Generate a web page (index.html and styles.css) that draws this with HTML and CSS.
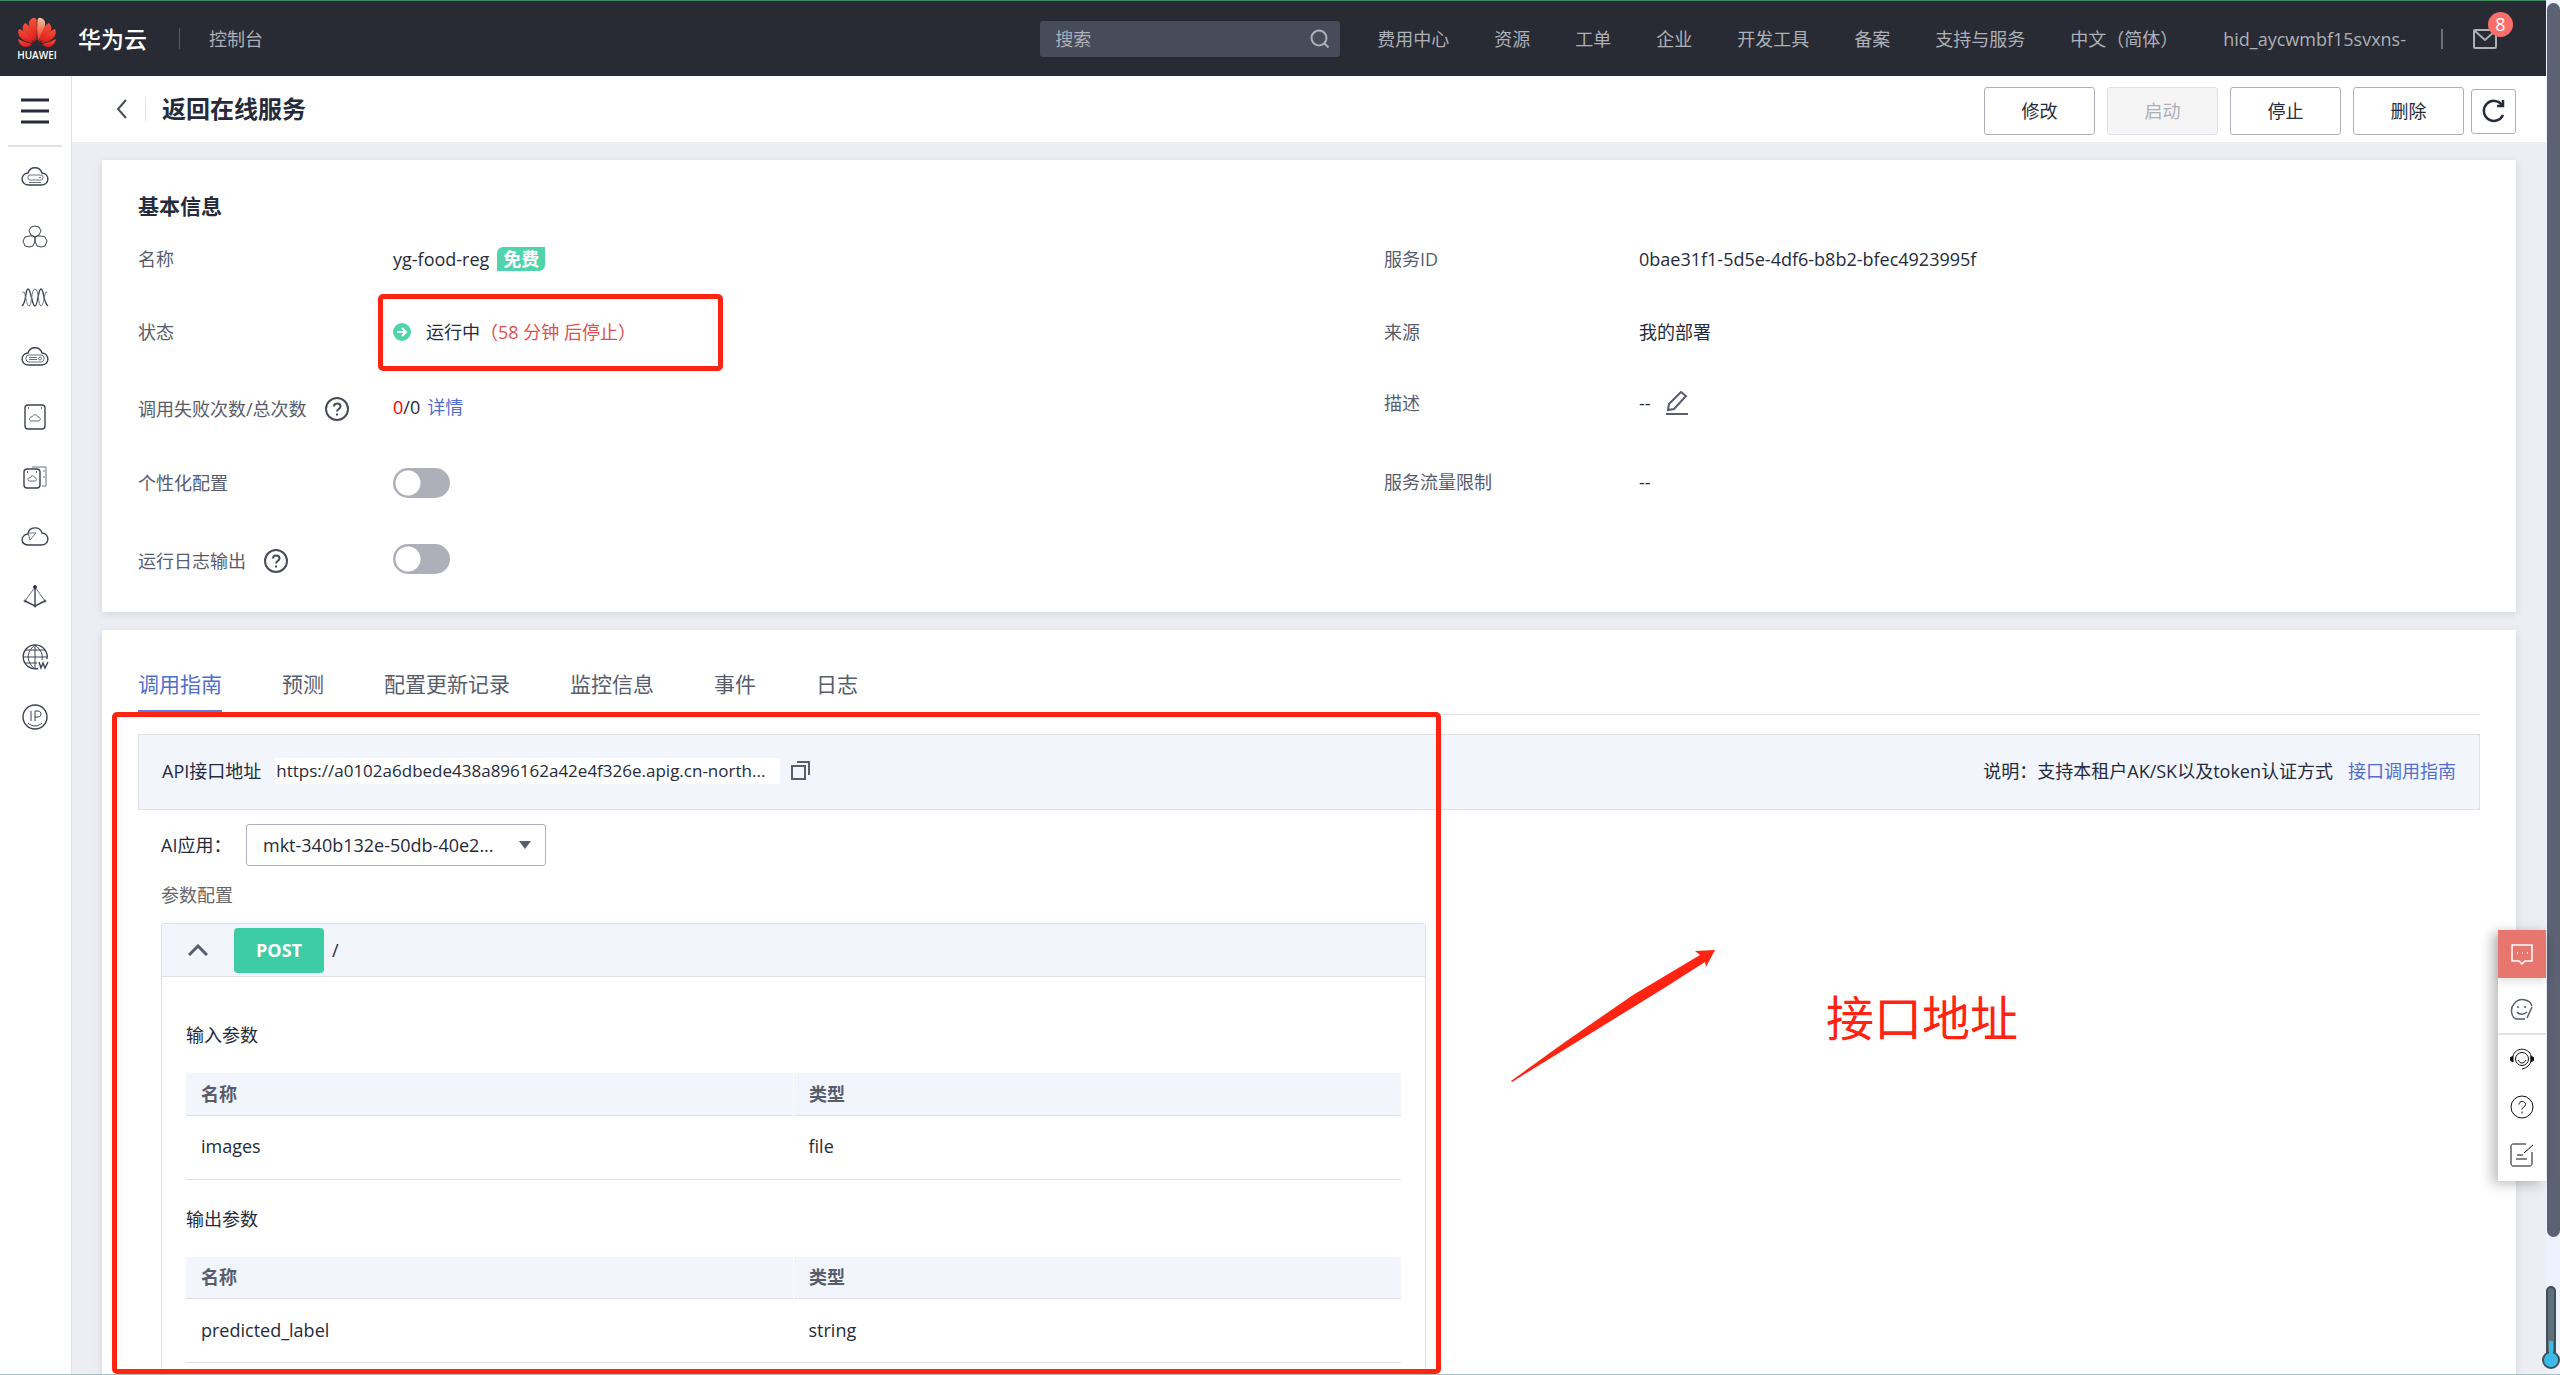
FILE: index.html
```html
<!DOCTYPE html>
<html lang="zh-CN">
<head>
<meta charset="utf-8">
<title>返回在线服务</title>
<link rel="stylesheet" href="styles.css">
</head>
<body>
<div class="app">
  <div class="main-area">
    <header class="topbar">
      <svg class="logo" width="40" height="44" viewBox="0 0 40 44" aria-label="HUAWEI">
        <defs>
          <linearGradient id="petal" x1="0" y1="0" x2="0" y2="1"><stop offset="0" stop-color="#f2553d"/><stop offset="1" stop-color="#e01818"/></linearGradient>
          <linearGradient id="petal-light" x1="0" y1="0" x2="0" y2="1"><stop offset="0" stop-color="#fbc39c"/><stop offset="1" stop-color="#e8301f"/></linearGradient>
        </defs>
        <g fill="url(#petal)">
          <path d="M19 24C13 15 10 6 13 3c3-3 6-3 6.500 0 .5 7 .5 14-.5 21z"/>
          <path fill="url(#petal-light)" d="M21 24c6-9 9-18 6-21-3-3-6-3-6.500 0-.5 7-.5 14 .5 21z"/>
          <path d="M18 25C8 20 2 12 8 6c5 2 9 12 10 19z"/>
          <path d="M22 25c10-5 16-13 10-19-5 2-9 12-10 19z"/>
          <path d="M16 26C5 25-1 18 2 12c6 2 11 8 14 14z"/>
          <path d="M24 26c11-1 17-8 14-14-6 2-11 8-14 14z"/>
          <path d="M15 27C10 32 3 31 1 22c4 2 9 4 14 5z"/>
          <path d="M25 27c5 5 12 4 14-5-4 2-9 4-14 5z"/>
        </g>
        <text x="20" y="42" text-anchor="middle" class="logo-text">HUAWEI</text>
      </svg>
      <span class="brand">华为云</span>
      <a class="console" href="#">控制台</a>
      <label class="search">
        <input type="text" placeholder="搜索" aria-label="搜索">
        <svg width="20" height="20" viewBox="0 0 20 20" fill="none" stroke="#adb0b8" stroke-width="2"><circle cx="9" cy="9" r="7.500"/><path d="M14 14l4.500 4.500"/></svg>
      </label>
      <nav class="topnav">
        <a href="#">费用中心</a><a href="#">资源</a><a href="#">工单</a><a href="#">企业</a><a href="#">开发工具</a><a href="#">备案</a><a href="#">支持与服务</a><a href="#">中文（简体）</a><a href="#">hid_aycwmbf15svxns-</a>
      </nav>
      <button class="mail" aria-label="消息">
        <svg width="24" height="20" viewBox="0 0 24 20" fill="none" stroke="#adb0b8" stroke-width="2"><rect x="1" y="1" width="22" height="18" rx="1"/><path d="M2 2l10 9 10-9"/></svg>
        <span class="badge">8</span>
      </button>
    </header>
    <div class="body">
      <aside class="sidebar">
        <button class="burger" aria-label="菜单"><svg width="28" height="26" viewBox="0 0 28 26" stroke="#252b3a" stroke-width="3"><path d="M0 2h28M0 13h28M0 24h28"/></svg></button>
        <a href="#" aria-label="云服务器"><svg viewBox="0 0 28 28"><path class="bold" d="M7 10C9 3 19 3 21 10c8 1 8 12-1 12H8C-1 22-1 11 7 10z"/><g class="thin"><rect x="7" y="12" width="15" height="5" rx="2"/><path d="M8 19.500h12M18 14.500h2"/></g></svg></a>
        <a href="#" aria-label="集群"><svg viewBox="0 0 28 28"><path d="M14 3l4 1 2 4-2 4-4 2-4-2-2-4 2-4zM8 13l-4 1-2 4 2 5 4 1 4-1 2-5v-4l-2-1zM20 13l4 1 2 4-2 5-4 1-4-1-2-5v-4l2-1z"/></svg></a>
        <a href="#" aria-label="弹性伸缩"><svg viewBox="0 0 28 28"><path class="bold" d="M1 23C6 19 4 6 7 6s4 17 7 17S17 6 20 6s2 13 7 17"/><path class="thin" d="M2 10c2-6 3 13 6 13s2-17 6-17 3 17 6 17 4-19 6-13"/></svg></a>
        <a href="#" aria-label="专属云"><svg viewBox="0 0 28 28"><path class="bold" d="M7 10C9 3 19 3 21 10c8 1 8 12-1 12H8C-1 22-1 11 7 10z"/><g class="thin"><rect x="5" y="12" width="18" height="7" rx="3"/><path d="M8 14.500h8M8 16.500h8"/><circle cx="19" cy="15.500" r="1.500"/></g></svg></a>
        <a href="#" aria-label="磁盘"><svg viewBox="0 0 28 28"><rect class="bold" x="4" y="2" width="20" height="24" rx="3"/><path class="thin" d="M10 18c-3-1-1-5 1-4 1-3 5-3 6 0 3 0 3 4 0 4z"/><path class="bold" d="M7 5h1M20 5h1"/></svg></a>
        <a href="#" aria-label="磁盘备份"><svg viewBox="0 0 28 28"><rect class="bold" x="3" y="6" width="16" height="19" rx="3"/><path class="thin" d="M11 4h14v19h-4M8 18c-2-1-1-4 1-3 1-3 4-3 5 0 2 0 2 3 0 3zM22 8h2M22 14h2"/><path class="bold" d="M6 9h1M15 9h1"/></svg></a>
        <a href="#" aria-label="云迁移"><svg viewBox="0 0 28 28"><path class="bold" d="M7 11C8 3 19 3 21 10c8 1 8 12-1 12H8C-1 22-1 12 7 11z"/><path class="thin" d="M8 10h7l-6 7-2-8"/></svg></a>
        <a href="#" aria-label="网络"><svg viewBox="0 0 28 28"><path class="thin" d="M14 4L4 18M14 4l10 14"/><path class="bold" d="M4 18l10 5 10-5M14 4v19"/><circle cx="14" cy="4" r="1.500" fill="#252b3a"/><circle cx="4" cy="18" r="1"/><circle cx="24" cy="18" r="1"/><circle cx="14" cy="23" r="1"/></svg></a>
        <a href="#" aria-label="域名"><svg viewBox="0 0 28 28"><path class="bold" d="M17 25.500A12 12 0 1 1 26 16M18 19l2 6 2-5 2 5 3-6"/><path d="M14 2c-9 7-9 17 0 24M14 2c7 5 8 11 7 15M14 2v24M2 14h24M4 7h20M4 20h12"/></svg></a>
        <a href="#" aria-label="弹性公网IP"><svg viewBox="0 0 28 28"><circle class="bold" cx="14" cy="14" r="12"/><path d="M10 8v10M14 18V8h3c4 0 4 6 0 6h-3M7 20c4 4 10 4 14 0"/></svg></a>
      </aside>
      <main class="content">
        <div class="titlebar">
          <button class="back" aria-label="返回"><svg width="12" height="20" viewBox="0 0 12 20" fill="none" stroke="#464c59" stroke-width="2"><path d="M10 1L2 10l8 9"/></svg></button>
          <h1>返回在线服务</h1>
          <div class="actions">
            <button class="btn">修改</button>
            <button class="btn" disabled>启动</button>
            <button class="btn">停止</button>
            <button class="btn">删除</button>
            <button class="btn refresh" aria-label="刷新"><svg width="24" height="24" viewBox="0 0 24 24" fill="none" stroke="#252b3a" stroke-width="2.500"><path d="M21 16A10 10 0 1 1 20 6"/><path d="M15 7h6V1"/></svg></button>
          </div>
        </div>
        <section class="card info">
          <h2>基本信息</h2>
          <div class="info-cols">
            <dl class="info-left">
              <dt>名称</dt><dd>yg-food-reg<span class="tag">免费</span></dd>
              <dt>状态</dt>
              <dd class="status"><svg width="18" height="18" viewBox="0 0 18 18"><circle cx="9" cy="9" r="9" fill="#50d4ab"/><path d="M4 9h9M9 5l4 4-4 4" fill="none" stroke="#fff" stroke-width="2"/></svg><span>运行中<span class="warn">（58 分钟 后停止）</span></span><span class="mark mark-status"></span></dd>
              <dt class="with-help">调用失败次数/总次数<svg class="help" viewBox="0 0 24 24"><circle cx="12" cy="12" r="11"/><path d="M9 9.500c0-4 6.500-4 6.500 0 0 2.500-3.500 2.500-3.500 5M12 16.500v2"/></svg></dt>
              <dd><span class="fail">0</span>/0<a class="detail" href="#">详情</a></dd>
              <dt><label for="custom">个性化配置</label></dt><dd><input class="switch" type="checkbox" id="custom"></dd>
              <dt class="with-help"><label for="runlog">运行日志输出</label><svg class="help" viewBox="0 0 24 24"><circle cx="12" cy="12" r="11"/><path d="M9 9.500c0-4 6.500-4 6.500 0 0 2.500-3.500 2.500-3.500 5M12 16.500v2"/></svg></dt><dd><input class="switch" type="checkbox" id="runlog"></dd>
            </dl>
            <dl class="info-right">
              <dt>服务ID</dt><dd>0bae31f1-5d5e-4df6-b8b2-bfec4923995f</dd>
              <dt>来源</dt><dd>我的部署</dd>
              <dt>描述</dt><dd>--<button class="edit" aria-label="编辑"><svg width="22" height="24" viewBox="0 0 22 24" fill="none" stroke="#575d6c" stroke-width="2"><path d="M3 13L15 1l5 4L8 18l-6 1zM0 23h22"/></svg></button></dd>
              <dt>服务流量限制</dt><dd>--</dd>
            </dl>
          </div>
        </section>
        <section class="card guide">
          <nav class="tabs">
            <a class="active" href="#">调用指南</a><a href="#">预测</a><a href="#">配置更新记录</a><a href="#">监控信息</a><a href="#">事件</a><a href="#">日志</a>
          </nav>
          <div class="api">
            <span>API接口地址</span>
            <span class="url">https://a0102a6dbede438a896162a42e4f326e.apig.cn-north...</span>
            <button class="copy" aria-label="复制"><svg width="20" height="20" viewBox="0 0 20 20" fill="none" stroke="#575d6c" stroke-width="2"><path d="M1 5h13v13H1zM6 1h12v13"/></svg></button>
            <span class="note">说明：支持本租户AK/SK以及token认证方式</span>
            <a href="#">接口调用指南</a>
          </div>
          <div class="guide-body">
            <div class="app-row">
              <label for="app">AI应用：</label>
              <span class="select-wrap"><select id="app"><option>mkt-340b132e-50db-40e2...</option></select></span>
            </div>
            <h3>参数配置</h3>
            <div class="panel">
              <div class="panel-head">
                <button class="fold" aria-label="收起"><svg width="20" height="12" viewBox="0 0 20 12" fill="none" stroke="#575d6c" stroke-width="3"><path d="M1 11l9-9 9 9"/></svg></button>
                <span class="method">POST</span><span>/</span>
              </div>
              <div class="panel-body">
                <h4>输入参数</h4>
                <table><thead><tr><th>名称</th><th>类型</th></tr></thead><tbody><tr><td>images</td><td>file</td></tr></tbody></table>
                <h4>输出参数</h4>
                <table><thead><tr><th>名称</th><th>类型</th></tr></thead><tbody><tr><td>predicted_label</td><td>string</td></tr></tbody></table>
              </div>
            </div>
          </div>
          <span class="mark mark-guide"></span>
          <svg class="arrow" width="208" height="134" viewBox="0 0 208 134"><path fill="#ff2312" d="M0 132L54 93 122 46 189 6l-5-4 20-1-9 17-1-5-44 28-60 37-89 55z"/></svg>
          <span class="callout">接口地址</span>
        </section>
      </main>
    </div>
  </div>
  <div class="scroll"><div class="thumb"></div></div>
  <svg class="gauge" width="18" height="84" viewBox="0 0 18 84"><rect x="5" y="1" width="8" height="72" rx="4" fill="#5f6f7b" stroke="#405059" stroke-width="2"/><circle cx="9" cy="74" r="8" fill="#3cbbe9" stroke="#405059" stroke-width="2"/><path d="M9 55v18" stroke="#3cbbe9" stroke-width="4"/></svg>
  <div class="floatbar">
    <button class="chat" aria-label="反馈"><svg width="24" height="24" viewBox="0 0 24 24"><path d="M2 3h20v16h-7l-3 3-3-3H2zM7 11h1M12 11h1M17 11h1"/></svg></button>
    <div class="tools">
      <button aria-label="评价"><svg class="grey" width="24" height="24" viewBox="0 0 24 24"><path d="M15 22H6c-5-2-6-11-2-15 5-7 16-5 18 2M22 10l-5 11M7 10h2M14 10h2M7 15c2 3 7 3 10 0"/></svg></button>
      <button aria-label="客服"><svg width="24" height="24" viewBox="0 0 24 24"><circle cx="12" cy="12" r="6.500"/><path d="M3 9c2-9 16-9 18 0v5c-1 4-4 7-9 8M8 13c2 4 6 4 8 0"/><path fill="#111" d="M3 9v6L0 13v-2zM21 9v6l3-2v-2z"/></svg></button>
      <button aria-label="帮助"><svg width="24" height="24" viewBox="0 0 24 24"><circle cx="12" cy="12" r="11"/><path d="M9 9.500c0-4 6.500-4 6.500 0 0 2.500-3.500 2.500-3.500 5M12 16.500v2"/></svg></button>
      <button aria-label="建议"><svg width="24" height="24" viewBox="0 0 24 24"><path d="M16 1H3C2 1 1 2 1 3v18c0 1 1 2 2 2h17c1 0 2-1 2-2V9M23 2l-9 8M7 12h6M6 16h11"/></svg></button>
    </div>
  </div>
</div>
</body>
</html>
```
FILE: styles.css
```css
* { box-sizing: border-box; }
body, h1, h2, h3, h4, dl, dd { margin: 0; }
body {
  font-family: "Open Sans", "Noto Sans CJK SC", sans-serif;
  font-size: 18px;
  line-height: 26px;
  color: #252b3a;
  background: #edeef4;
}
a { color: #526ecc; text-decoration: none; }
button, input, select { font: inherit; color: inherit; }
button { background: none; border: 0; padding: 0; cursor: pointer; }
svg { display: block; flex: none; }

.app {
  position: relative;
  display: flex;
  height: 100vh;
  overflow: hidden;
  border-bottom: 1px solid #a3bfc1;
}
.main-area { flex: 1; min-width: 0; display: flex; flex-direction: column; }

/* top bar */
.topbar {
  flex: none;
  display: flex;
  align-items: center;
  height: 76px;
  padding: 0 49px 0 17px;
  background: #282b33;
  border-top: 1px solid #428a5b;
  white-space: nowrap;
}
.logo-text { font: 600 10px "Open Sans", sans-serif; fill: #fff; }
.brand { margin-left: 21px; font-size: 23px; font-weight: 500; color: #fff; }
.console {
  margin-left: 32px;
  padding-left: 30px;
  color: #adb0b8;
  background: linear-gradient(#575d6c, #575d6c) left center / 1px 21px no-repeat;
}
.search {
  display: flex;
  align-items: center;
  width: 300px;
  height: 36px;
  margin-left: auto;
  padding: 0 10px 0 15px;
  background: #464c59;
  border-radius: 3px;
}
.search input { flex: 1; min-width: 0; padding: 0; background: none; border: 0; outline: 0; color: #adb0b8; }
.search input::placeholder { color: #adb0b8; opacity: 1; }
.topnav { display: flex; gap: 45px; margin-left: 37px; }
.topnav a { color: #adb0b8; }
.mail {
  position: relative;
  margin-left: 35px;
  padding-left: 32px;
  background: linear-gradient(#6c7078, #6c7078) left center / 2px 21px no-repeat;
}
.badge {
  position: absolute;
  left: 47px;
  top: -17px;
  width: 25px;
  height: 25px;
  border-radius: 50%;
  background: #fa6e6a;
  color: #fff;
  line-height: 25px;
}

/* side bar */
.body { flex: 1; min-height: 0; display: flex; }
.sidebar {
  flex: none;
  display: flex;
  flex-direction: column;
  align-items: center;
  width: 72px;
  padding: 0 2px 0 0;
  background: #fff;
  border-right: 1px solid #dfe1e6;
}
.sidebar a { display: flex; align-items: center; height: 60px; }
.sidebar a svg { width: 28px; height: 28px; fill: none; stroke: #3d4351; stroke-width: 1; }
.sidebar .bold { stroke-width: 1.4; }
.sidebar .thin { stroke: #6c7280; }
.burger { padding: 22px 13px 21px; border-bottom: 2px solid #dfe1e6; }

/* page title */
.content { flex: 1; min-width: 0; }
.titlebar {
  display: flex;
  align-items: center;
  height: 66px;
  padding: 0 30px 0 44px;
  background: #fff;
}
.titlebar h1 {
  flex: 1;
  margin-left: 17px;
  padding-left: 16px;
  border-left: 1px solid #dfe1e6;
  font-size: 24px;
  line-height: 24px;
}
.actions { display: flex; align-items: center; gap: 12px; padding-top: 4px; }
.btn {
  display: flex;
  align-items: center;
  justify-content: center;
  width: 111px;
  height: 48px;
  background: #fff;
  border: 1px solid #adb0b8;
  border-radius: 3px;
}
.btn:disabled { background: #f5f5f6; border-color: #dfe1e6; color: #adb0b8; }
.refresh { width: 45px; height: 45px; margin-left: -5px; }

/* cards */
.card {
  position: relative;
  margin: 18px 30px 0;
  padding: 0 36px;
  background: #fff;
  box-shadow: 0 2px 8px rgba(40, 43, 51, .12);
}
.info { padding-top: 31px; padding-bottom: 14px; }
.info h2 { margin-bottom: 1px; font-size: 21px; line-height: 30px; }
.info-cols { display: grid; grid-template-columns: 1246px 1fr; }
dl { display: grid; grid-template-columns: 255px 1fr; align-items: center; align-content: start; }
.info-left { grid-template-rows: 74px 72px 78px 74px 78px; }
.info-right { grid-template-rows: 74px 72px 70px 88px; }
dt { display: flex; align-items: center; gap: 18px; color: #575d6c; }
.with-help { padding-top: 4px; }
dd { display: flex; align-items: center; position: relative; }
.help { width: 24px; height: 24px; fill: none; stroke: #464c59; stroke-width: 2; }
.tag {
  margin-left: 8px;
  padding: 0 6px;
  line-height: 24px;
  border-radius: 6px 0;
  background: #50d4ab;
  color: #fff;
  font-weight: 700;
}
.status svg { margin-right: 15px; }
.warn { color: #e0504c; }
.fail { color: #f00; }
.detail { margin-left: 7px; }
.edit { margin-left: 15px; }
.switch {
  appearance: none;
  width: 57px;
  height: 30px;
  margin: 0;
  border-radius: 15px;
  background: radial-gradient(circle at 15px 15px, #fff 12px, #adb0b8 13px);
}

/* guide card */
.tabs {
  display: flex;
  gap: 60px;
  height: 85px;
  border-bottom: 1px solid #dfe1e6;
  font-size: 21px;
}
.tabs a { padding-top: 40px; color: #575d6c; line-height: 28px; border-bottom: 4px solid transparent; }
.tabs a.active { color: #526ecc; border-color: #5e7ce0; }
.api {
  display: flex;
  align-items: center;
  height: 76px;
  margin-top: 19px;
  padding: 0 23px 2px;
  background: #f2f5fc;
  border: 1px solid #dfe1e6;
  white-space: nowrap;
}
.url { min-width: 505px; margin-left: 14px; padding: 0 1px; background: #fff; font-size: 17px; }
.copy { margin-left: 11px; }
.note { margin: 0 15px 0 auto; }
.guide-body { width: 1288px; padding: 14px 0 0 23px; }
.app-row { display: flex; align-items: center; }
.app-row label { width: 85px; }
.select-wrap { position: relative; width: 300px; }
.select-wrap::after {
  content: "";
  position: absolute;
  right: 15px;
  top: 17px;
  border: 6px solid transparent;
  border-top: 8px solid #575d6c;
  border-bottom: 0;
}
select {
  appearance: none;
  display: block;
  width: 100%;
  height: 42px;
  padding: 0 16px;
  background: #fff;
  border: 1px solid #adb0b8;
  border-radius: 3px;
}
h3 { margin: 16px 0 15px; font-size: 18px; font-weight: 400; color: #666; }
.panel { border: 1px solid #dfe1e6; border-radius: 3px; }
.panel-head {
  display: flex;
  align-items: center;
  height: 53px;
  padding-left: 26px;
  background: #f2f5fc;
  border-bottom: 1px solid #dfe1e6;
}
.method {
  width: 90px;
  margin: 0 8px 0 26px;
  line-height: 45px;
  text-align: center;
  border-radius: 4px;
  background: #3dcca6;
  color: #fff;
  font-weight: 700;
}
.panel-body { padding: 19px 24px; }
h4 { padding: 26px 0 25px; font-size: 18px; font-weight: 400; }
table { width: 100%; table-layout: fixed; border-collapse: collapse; text-align: left; }
th { height: 42px; padding: 0 15px; background: #f2f5fc; color: #575d6c; }
th + th { border-left: 1px solid #fff; }
tr { border-bottom: 1px solid #dfe1e6; }
td { height: 64px; padding: 0 15px 2px; }

/* hand-drawn annotations */
.mark { position: absolute; border: 5px solid #ff2312; border-radius: 5px; pointer-events: none; }
.mark-status { left: -15px; top: -25px; width: 345px; height: 77px; }
.mark-guide { left: 10px; top: 82px; width: 1329px; height: 662px; }
.arrow { position: absolute; left: 1409px; top: 319px; }
.callout { position: absolute; left: 1724px; top: 353px; font-size: 48px; line-height: 70px; color: #ff2312; }

/* right edge */
.scroll { flex: none; width: 14px; padding: 3px 0 0 1px; background: #eef2fe; }
.thumb { height: 90%; border-radius: 7px; background: #5c6173; }
.gauge { position: absolute; right: 0; bottom: 4px; }
.floatbar {
  position: absolute;
  right: 14px;
  top: 930px;
  width: 48px;
  background: #fff;
  box-shadow: -6px 3px 12px rgba(0, 0, 0, .25);
}
.floatbar button { display: flex; align-items: center; justify-content: center; width: 48px; height: 48px; }
.floatbar svg { fill: none; stroke: #111; stroke-width: 1; }
.floatbar .grey { stroke: #575d6c; stroke-width: 1.5; }
.floatbar .chat { background: #e6766e; box-shadow: 0 4px 8px rgba(0, 0, 0, .12); }
.floatbar .chat svg { stroke: #fff; stroke-width: 1.5; }
.tools { padding-top: 6px; padding-bottom: 2px; }
.tools button:first-child { height: 51px; border-bottom: 2px solid #dfe1e6; }
```
